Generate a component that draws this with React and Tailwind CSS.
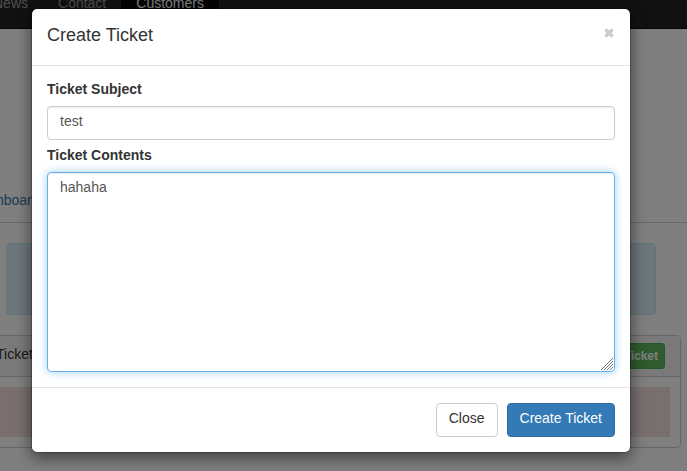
import React from 'react';

function PageBehind() {
  return (
    <div aria-hidden="true" className="-mt-[22px] bg-white">
      <nav className="-ml-[22px] flex h-[51px] border-b border-[#080808] bg-[#222] leading-5 text-[#9d9d9d]">
        <a href="#news" tabIndex={-1} className="p-[15px]">News</a>
        <a href="#contact" tabIndex={-1} className="p-[15px]">Contact</a>
        <a href="#customers" tabIndex={-1} className="bg-[#080808] p-[15px] text-white">Customers</a>
      </nav>
      <div className="-ml-[29px] flex h-[194px] items-end border-b border-[#ccc] pb-3 leading-5">
        <a href="#dashboard" tabIndex={-1} className="text-[#337ab7]">Dashboard</a>
      </div>
      <div className="mt-5 mr-[31px] ml-[6px] h-[72px] rounded border border-[#bce8f1] bg-[#d9edf7]" />
      <section className="mt-5 mr-[6px] -ml-[20px] rounded border border-[#ccc]">
        <header className="flex h-[41px] items-center justify-between border-b border-[#ccc] bg-[#f5f5f5] px-[15px] text-[#333]">
          <h2 className="pb-1 leading-5">Tickets</h2>
          <button type="button" tabIndex={-1} className="h-[26px] rounded-[3px] border border-[#4cae4c] bg-[#5cb85c] px-[6px] text-[12px] leading-4 font-bold text-white">
            New Ticket
          </button>
        </header>
        <div className="p-[10px]">
          <div className="h-[50px] bg-[#f2dede]" />
        </div>
      </section>
    </div>
  );
}

function CreateTicketModal() {
  return (
    <div
      role="dialog"
      aria-modal="true"
      aria-labelledby="modal-title"
      className="rounded-md border border-black/20 bg-white bg-clip-padding text-[#333] shadow-[0_5px_15px_rgba(0,0,0,0.5)]"
    >
      <header className="flex items-start justify-between border-b border-[#e5e5e5] px-[15px] pt-[13px] pb-[17px]">
        <h1 id="modal-title" className="text-[18px] leading-[26px]">Create Ticket</h1>
        <button type="button" aria-label="Close dialog" className="mt-[6px] mr-[1px] text-[#ccc]">
          <svg width="10" height="10" viewBox="0 0 10 10" stroke="currentColor" strokeWidth="3.4" fill="none">
            <path d="M1.5 1.5 8.5 8.5M8.5 1.5 1.5 8.5" />
          </svg>
        </button>
      </header>
      <form id="ticket-form" className="flex flex-col px-[15px] pt-[13px] pb-[15px]" onSubmit={(e) => e.preventDefault()}>
        <label htmlFor="subject" className="mb-[7px] leading-5 font-bold">Ticket Subject</label>
        <input
          id="subject"
          type="text"
          defaultValue="test"
          className="mb-[5px] h-[34px] rounded border border-[#ccc] px-3 pt-[4px] pb-[8px] leading-5 text-[#555] shadow-[inset_0_1px_1px_rgba(0,0,0,0.075)] outline-none"
        />
        <label htmlFor="contents" className="mb-[7px] leading-5 font-bold">Ticket Contents</label>
        <div className="relative h-[200px]">
          <textarea
            id="contents"
            defaultValue="hahaha"
            className="block h-full w-full resize-none rounded border border-[#66afe9] px-3 py-1 leading-5 text-[#555] shadow-[inset_0_1px_1px_rgba(0,0,0,0.075),0_0_8px_rgba(102,175,233,0.6)] outline-none"
          />
          <svg className="pointer-events-none absolute right-[2px] bottom-[2px]" width="12" height="12" viewBox="0 0 12 12" stroke="#777" fill="none">
            <path d="M0 12 12 0M3 12 12 3M6 12 12 6M9 12 12 9" />
          </svg>
        </div>
      </form>
      <footer className="flex justify-end gap-[9px] border-t border-[#e5e5e5] p-[15px]">
        <button type="button" className="h-[34px] rounded border border-[#ccc] bg-white px-3 pb-[4px] leading-5">Close</button>
        <button type="submit" form="ticket-form" className="h-[34px] rounded border border-[#2e6da4] bg-[#337ab7] px-3 pb-[4px] leading-5 text-white">
          Create Ticket
        </button>
      </footer>
    </div>
  );
}

export default function App() {
  return (
    <main className="relative h-screen overflow-hidden bg-white font-['Liberation_Sans',Arial,sans-serif] text-[14px]">
      <PageBehind />
      <div className="absolute inset-0 bg-black/50" />
      <div className="absolute inset-0 pt-2 pr-14 pl-[31px]">
        <CreateTicketModal />
      </div>
    </main>
  );
}
